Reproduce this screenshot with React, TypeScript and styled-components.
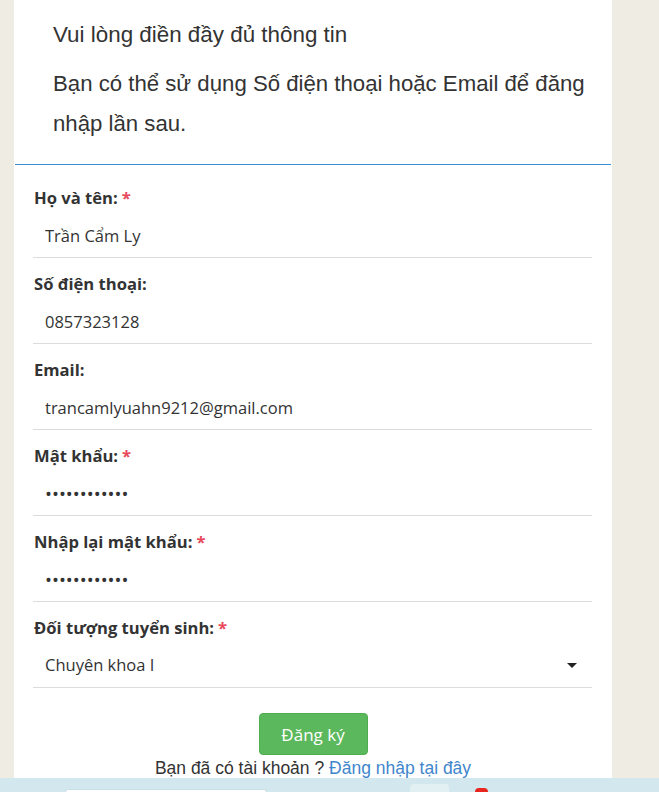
import React from "react";
import styled, { createGlobalStyle } from "styled-components";

const Global = createGlobalStyle`
  html, body { margin: 0; padding: 0; }
  body { background: #efede3; }
  * { box-sizing: border-box; }
`;

const Page = styled.div`
  height: 792px;
  display: flex;
  flex-direction: column;
  overflow: hidden;
`;

const Main = styled.div`
  flex: 1;
  min-height: 0;
  overflow: hidden;
  padding-left: 14px;
`;

const Panel = styled.div`
  width: 598px;
  height: 100%;
  background: #fff;
  display: flex;
  flex-direction: column;
`;

const Intro = styled.div`
  padding: 18px 20px 20px 38px;
  border-bottom: 1px solid #3a8ed6;
  margin: 0 1px;
  font-family: "Liberation Sans", Arial, sans-serif;
  color: #333;
`;

const Title = styled.h3`
  margin: 0 0 12px 0;
  font-size: 22.4px;
  font-weight: 400;
  line-height: 34px;
`;

const Lead = styled.p`
  margin: 0;
  font-size: 22.2px;
  line-height: 40px;
`;

const Form = styled.form`
  padding: 21px 20px 0 19px;
  display: flex;
  flex-direction: column;
  gap: 14px;
  font-family: "Segoe UI", "Open Sans", "Noto Sans", sans-serif;
`;

const Row = styled.div`
  display: flex;
  flex-direction: column;
`;

const Label = styled.label`
  display: block;
  padding: 1px 0 1px 1px;
  font-size: 16.6px;
  font-weight: 700;
  line-height: 22px;
  color: #333;
`;

const Req = styled.span`
  color: #e8475a;
  margin-left: 4px;
`;

const Field = styled.div`
  height: 48px;
  border-bottom: 1px solid #dcdcdc;
  display: flex;
  align-items: flex-start;
`;

const Input = styled.input<{ $secret?: boolean }>`
  width: 100%;
  border: 0;
  outline: none;
  background: transparent;
  padding: 13px 12px 10px 12px;
  height: 47px;
  line-height: 24px;
  font-family: "Segoe UI", "Open Sans", "Noto Sans", sans-serif;
  font-size: ${(p) => (p.$secret ? "18.5px" : "16.5px")};
  color: #333;
  letter-spacing: 0;
`;

const SelectBox = styled.div`
  width: 100%;
  height: 47px;
  padding: 13px 15px 10px 12px;
  line-height: 24px;
  font-size: 16.5px;
  color: #333;
  display: flex;
  justify-content: space-between;
  align-items: center;
`;

const Caret = styled.span`
  width: 0;
  height: 0;
  border-left: 5px solid transparent;
  border-right: 5px solid transparent;
  border-top: 5px solid #222;
  margin-top: 1px;
`;

const Actions = styled.div`
  display: flex;
  flex-direction: column;
  align-items: center;
  padding-top: 25px;
`;

const Button = styled.button`
  width: 109px;
  height: 42px;
  border: 1px solid #4cae4c;
  border-radius: 4px;
  background: #5cb85c;
  color: #fff;
  font-family: "Segoe UI", "Open Sans", "Noto Sans", sans-serif;
  font-size: 17px;
  cursor: pointer;
`;

const Already = styled.div`
  margin-top: 3px;
  font-family: "Liberation Sans", Arial, sans-serif;
  font-size: 17.5px;
  line-height: 20px;
  color: #333;
`;

const Link = styled.a`
  color: #3f86cc;
  text-decoration: none;
`;

const BottomBar = styled.div`
  height: 14px;
  flex-shrink: 0;
  background: #d3e8ee;
  display: flex;
  align-items: flex-end;
  padding-left: 65px;
`;

const SearchPill = styled.div`
  width: 202px;
  height: 3px;
  background: #fff;
  border-radius: 8px 8px 0 0;
  border: 1px solid #c8dfe6;
  border-bottom: 0;
`;

const TabBox = styled.div`
  margin-left: 143px;
  width: 39px;
  height: 8px;
  background: #e3f0f3;
  border-radius: 4px 4px 0 0;
`;

const Dot = styled.div`
  margin-left: 26px;
  width: 13px;
  height: 4px;
  background: #e8261f;
  border-radius: 7px 7px 0 0;
`;

type F = { label: string; value: string; required?: boolean; secret?: boolean };

const fields: F[] = [
  { label: "Họ và tên:", value: "Trần Cẩm Ly", required: true },
  { label: "Số điện thoại:", value: "0857323128" },
  { label: "Email:", value: "trancamlyuahn9212@gmail.com" },
  { label: "Mật khẩu:", value: "abcdefghijkl", required: true, secret: true },
  { label: "Nhập lại mật khẩu:", value: "abcdefghijkl", required: true, secret: true },
];

export default function App() {
  return (
    <Page>
      <Global />
      <Main>
        <Panel>
          <Intro>
            <Title>Vui lòng điền đầy đủ thông tin</Title>
            <Lead>
              Bạn có thể sử dụng Số điện thoại hoặc Email để đăng nhập lần sau.
            </Lead>
          </Intro>
          <Form onSubmit={(e) => e.preventDefault()}>
            {fields.map((f) => (
              <Row key={f.label}>
                <Label>
                  {f.label}
                  {f.required && <Req>*</Req>}
                </Label>
                <Field>
                  <Input
                    type={f.secret ? "password" : "text"}
                    defaultValue={f.value}
                    $secret={f.secret}
                    readOnly
                  />
                </Field>
              </Row>
            ))}
            <Row>
              <Label>
                Đối tượng tuyển sinh:<Req>*</Req>
              </Label>
              <Field>
                <SelectBox>
                  <span>Chuyên khoa I</span>
                  <Caret />
                </SelectBox>
              </Field>
            </Row>
          </Form>
          <Actions>
            <Button type="button">Đăng ký</Button>
            <Already>
              Bạn đã có tài khoản ? <Link href="#">Đăng nhập tại đây</Link>
            </Already>
          </Actions>
        </Panel>
      </Main>
      <BottomBar>
        <SearchPill />
        <TabBox />
        <Dot />
      </BottomBar>
    </Page>
  );
}
